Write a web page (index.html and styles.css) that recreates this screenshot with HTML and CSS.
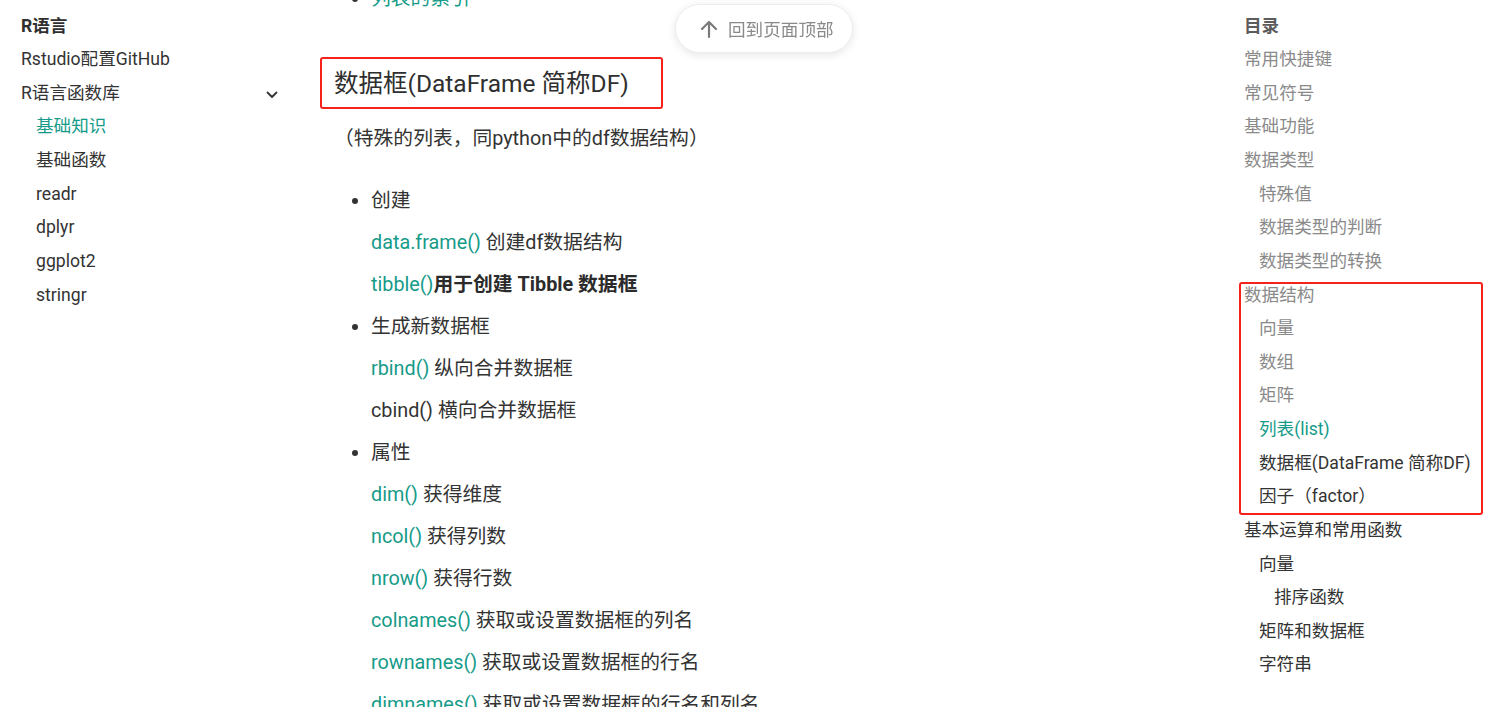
FILE: index.html
```html
<!DOCTYPE html>
<html lang="zh-CN">
<head>
<meta charset="utf-8">
<title>R语言函数库 - 基础知识</title>
<link rel="stylesheet" href="styles.css">
</head>
<body>
<div class="page">
  <aside class="sidebar">
    <div class="side-title">R语言</div>
    <div class="side-item">Rstudio配置GitHub</div>
    <div class="side-item side-group">
      <span>R语言函数库</span>
      <svg class="chev" width="12" height="8" viewBox="0 0 12 8"><path d="M1.5 1.5 L6 6 L10.5 1.5" fill="none" stroke="#333" stroke-width="1.8" stroke-linecap="round" stroke-linejoin="round"/></svg>
    </div>
    <div class="side-sub active">基础知识</div>
    <div class="side-sub">基础函数</div>
    <div class="side-sub">readr</div>
    <div class="side-sub">dplyr</div>
    <div class="side-sub">ggplot2</div>
    <div class="side-sub">stringr</div>
  </aside>

  <main class="content">
    <ul class="list first-list">
      <li><div class="line"><span class="link">列表的索引</span></div></li>
    </ul>
    <h2 class="heading">数据框(DataFrame 简称DF)</h2>
    <p class="intro">（特殊的列表，同python中的df数据结构）</p>
    <ul class="list">
      <li>
        <div class="line">创建</div>
        <p class="line"><span class="link">data.frame()</span> 创建df数据结构</p>
        <p class="line"><span class="link">tibble()</span><strong>用于创建 Tibble 数据框</strong></p>
      </li>
      <li>
        <div class="line">生成新数据框</div>
        <p class="line"><span class="link">rbind()</span> 纵向合并数据框</p>
        <p class="line">cbind() 横向合并数据框</p>
      </li>
      <li>
        <div class="line">属性</div>
        <p class="line"><span class="link">dim()</span> 获得维度</p>
        <p class="line"><span class="link">ncol()</span> 获得列数</p>
        <p class="line"><span class="link">nrow()</span> 获得行数</p>
        <p class="line"><span class="link">colnames()</span> 获取或设置数据框的列名</p>
        <p class="line"><span class="link">rownames()</span> 获取或设置数据框的行名</p>
        <p class="line"><span class="link">dimnames()</span> 获取或设置数据框的行名和列名</p>
      </li>
    </ul>
  </main>

  <nav class="toc">
    <div class="toc-title">目录</div>
    <div class="toc-item muted">常用快捷键</div>
    <div class="toc-item muted">常见符号</div>
    <div class="toc-item muted">基础功能</div>
    <div class="toc-item muted">数据类型</div>
    <div class="toc-item lv2 muted">特殊值</div>
    <div class="toc-item lv2 muted">数据类型的判断</div>
    <div class="toc-item lv2 muted">数据类型的转换</div>
    <div class="toc-group">
      <div class="toc-item muted">数据结构</div>
      <div class="toc-item lv2 muted">向量</div>
      <div class="toc-item lv2 muted">数组</div>
      <div class="toc-item lv2 muted">矩阵</div>
      <div class="toc-item lv2 active">列表(list)</div>
      <div class="toc-item lv2">数据框(DataFrame 简称DF)</div>
      <div class="toc-item lv2">因子（factor）</div>
    </div>
    <div class="toc-item">基本运算和常用函数</div>
    <div class="toc-item lv2">向量</div>
    <div class="toc-item lv3">排序函数</div>
    <div class="toc-item lv2">矩阵和数据框</div>
    <div class="toc-item lv2">字符串</div>
  </nav>
</div>

<div class="back-top">
  <svg width="20" height="20" viewBox="0 0 20 20"><path d="M10 18 V3 M3 10 L10 3 L17 10" fill="none" stroke="#7a7a7a" stroke-width="2.2" stroke-linecap="round" stroke-linejoin="round"/></svg>
  <span>回到页面顶部</span>
</div>
</body>
</html>
```

FILE: styles.css
```css
* { box-sizing: border-box; }
html, body {
  margin: 0;
  padding: 0;
  background: #fff;
  overflow: hidden;
}
body {
  font-family: Roboto, "Noto Sans CJK SC", sans-serif;
  color: #333;
  height: 707px;
}
.page {
  display: grid;
  grid-template-columns: 320px 924px 1fr;
  height: 707px;
}

/* left sidebar */
.sidebar {
  padding: 9.5px 42px 0 21px;
  font-size: 17.6px;
  line-height: 33.63px;
}
.side-title { font-weight: 700; color: #2f2f2f; }
.side-item { color: #333; }
.side-group {
  display: flex;
  align-items: center;
  justify-content: space-between;
}
.chev { margin-top: 2px; }
.side-sub { padding-left: 15px; color: #333; }
.side-sub.active { color: #169b89; }

/* main */
.content {
  padding-left: 14px;
  margin-top: -16px;
  font-size: 19.8px;
}
.list {
  margin: 0;
  padding-left: 37px;
  list-style: disc;
}
.list li { margin-top: 12px; }
.list li:first-child { margin-top: 0; }
.first-list { margin-bottom: 43px; }
.line {
  margin: 0;
  line-height: 30px;
}
p.line { margin-top: 12px; }
.link { color: #169b89; }
strong { font-weight: 700; color: #2b2b2b; }
.heading {
  display: block;
  width: fit-content;
  margin: 0 0 15px -14px;
  padding: 0 32px 0 12px;
  border: 2.5px solid #f5221b;
  border-radius: 3px;
  font-size: 24.5px;
  font-weight: 400;
  line-height: 49px;
  height: 52px;
  color: #2f2f2f;
}
.intro {
  margin: 0 0 32px 0;
  line-height: 30px;
}

/* toc */
.toc {
  padding-top: 9.5px;
  font-size: 17.6px;
  line-height: 33.63px;
}
.toc-title { font-weight: 700; color: #5c5c5c; }
.toc-item { color: #333; white-space: nowrap; }
.toc-item.muted { color: #8a8a8a; }
.toc-item.active { color: #169b89; }
.lv2 { padding-left: 15px; }
.lv3 { padding-left: 30px; }
.toc-group { position: relative; }
.toc-group::after {
  content: "";
  position: absolute;
  left: -5px;
  top: 3px;
  bottom: -1px;
  width: 240px;
  border: 2.5px solid #f5221b;
  border-radius: 3px;
  pointer-events: none;
}

/* back to top */
.back-top {
  position: fixed;
  left: 675px;
  top: 4px;
  width: 178px;
  height: 49px;
  border-radius: 25px;
  background: #fff;
  border: 1px solid #ececec;
  box-shadow: 0 2px 8px rgba(0, 0, 0, 0.10);
  display: flex;
  align-items: center;
  gap: 9px;
  padding-left: 23px;
  font-size: 17.6px;
  color: #8a8a8a;
}
.back-top svg { flex: none; }
```
